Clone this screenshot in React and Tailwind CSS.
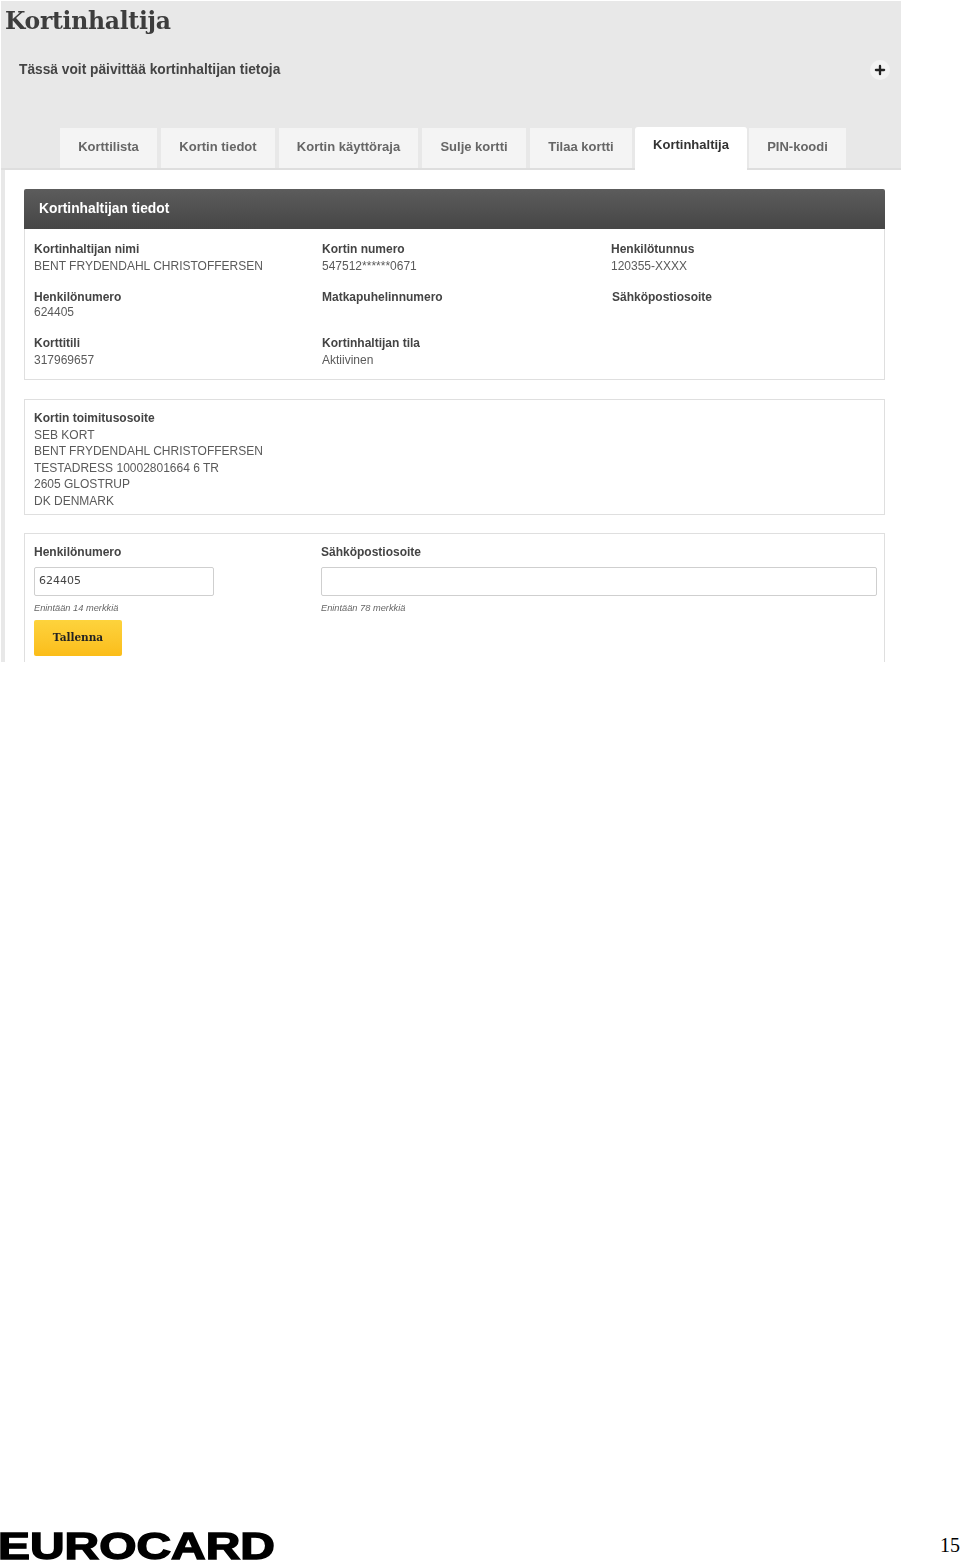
import React from "react";
import { Plus } from "lucide-react";

const sans = "font-['Liberation_Sans',Arial,sans-serif]";

const tabs = [
  { t: "Korttilista", c: "w-[97px] mr-[4px]" },
  { t: "Kortin tiedot", c: "w-[114px] mr-[4px]" },
  { t: "Kortin käyttöraja", c: "w-[139px] mr-[4px]" },
  { t: "Sulje kortti", c: "w-[104px] mr-[4px]" },
  { t: "Tilaa kortti", c: "w-[102px] mr-[3px]" },
  { t: "Kortinhaltija", c: "w-[112px] mr-[2px]", active: true },
  { t: "PIN-koodi", c: "w-[97px]" },
];

function Field({ label, value, valueClass = "", className = "" }) {
  return (
    <div className={className}>
      <div className="text-[12px] leading-[17px] font-bold text-[#444]">{label}</div>
      {value && <div className={`text-[12px] leading-[17px] text-[#5a5a5a] ${valueClass}`}>{value}</div>}
    </div>
  );
}

export default function App() {
  return (
    <div className={`h-[1562px] bg-white flex flex-col justify-between ${sans}`}>
      <div className="w-[900px] h-[661px] mt-px ml-px flex flex-col overflow-hidden blur-[0.4px]">
        <header className="h-[169px] shrink-0 bg-[#e8e8e8] border-b-2 border-[#dedede] flex flex-col">
          <h1 className="h-[38px] pl-[4px] pt-[4px] font-['DejaVu_Serif',serif] font-bold text-[23.5px] leading-[32px] text-[#3d3d3d] tracking-[-0.3px]">
            Kortinhaltija
          </h1>
          <div className="flex items-center justify-between h-[60px] mt-px pl-[18px] pr-[11px]">
            <p className="text-[13.75px] font-bold text-[#444]">Tässä voit päivittää kortinhaltijan tietoja</p>
            <span className="w-[20px] h-[20px] rounded-full bg-[#f3f3f3] flex items-center justify-center">
              <Plus size={14} strokeWidth={4} className="text-[#222]" />
            </span>
          </div>
          <nav className="flex items-end pl-[59px] mt-auto">
            {tabs.map((x) =>
              x.active ? (
                <div key={x.t} className={`${x.c} h-[43px] -mb-[2px] rounded-t-[3px] bg-white flex justify-center pt-[9px] text-[13px] leading-[18px] font-bold text-[#333]`}>
                  {x.t}
                </div>
              ) : (
                <div key={x.t} className={`${x.c} h-[40px] pb-[3px] bg-[#f4f4f4] flex items-center justify-center text-[13px] font-bold text-[#666]`}>
                  {x.t}
                </div>
              )
            )}
          </nav>
        </header>

        <div className="flex-1 bg-white border-l-4 border-[#e8e8e8] pl-[19px] pr-[16px] pt-[19px] overflow-hidden">
          <section>
            <h2 className="h-[40px] rounded-t-[2px] bg-gradient-to-b from-[#5c5c5c] to-[#464646] flex items-center pl-[15px] text-[13.8px] font-bold text-white">
              Kortinhaltijan tiedot
            </h2>
            <div className="h-[151px] border border-t-0 border-[#dfdfdf] pt-[12px] pl-[9px]">
              <div className="grid grid-cols-[288px_289px_1fr] h-[48px]">
                <Field label="Kortinhaltijan nimi" value="BENT FRYDENDAHL CHRISTOFFERSEN" />
                <Field label="Kortin numero" value="547512******0671" />
                <Field label="Henkilötunnus" value="120355-XXXX" />
              </div>
              <div className="grid grid-cols-[288px_289px_1fr] h-[46px]">
                <Field label="Henkilönumero" value="624405" valueClass="-mt-[2px]" />
                <Field label="Matkapuhelinnumero" />
                <Field label="Sähköpostiosoite" className="ml-px" />
              </div>
              <div className="grid grid-cols-[288px_289px_1fr]">
                <Field label="Korttitili" value="317969657" />
                <Field label="Kortinhaltijan tila" value="Aktiivinen" />
              </div>
            </div>
          </section>

          <section className="mt-[19px] h-[116px] border border-[#dfdfdf] pl-[9px] pt-[10px]">
            <div className="text-[12px] leading-[16.6px] font-bold text-[#444]">Kortin toimitusosoite</div>
            <div className="text-[12px] leading-[16.6px] text-[#5a5a5a]">
              <div>SEB KORT</div>
              <div>BENT FRYDENDAHL CHRISTOFFERSEN</div>
              <div>TESTADRESS 10002801664 6 TR</div>
              <div>2605 GLOSTRUP</div>
              <div>DK DENMARK</div>
            </div>
          </section>

          <section className="mt-[18px] h-[140px] border border-b-0 border-[#dfdfdf] pl-[9px] pr-[7px] pt-[10px]">
            <div className="grid grid-cols-[287px_1fr]">
              <div>
                <label className="block text-[12px] leading-[17px] font-bold text-[#444]">Henkilönumero</label>
                <input
                  readOnly
                  value="624405"
                  className="block mt-[6px] w-[180px] h-[29px] pb-[2px] rounded-[2px] border border-[#cfcfcf] bg-white px-[4px] font-['DejaVu_Sans',sans-serif] text-[11px] text-[#444] outline-none"
                />
                <p className="mt-[6px] text-[9.25px] leading-[12px] italic text-[#666]">Enintään 14 merkkiä</p>
              </div>
              <div>
                <label className="block text-[12px] leading-[17px] font-bold text-[#444]">Sähköpostiosoite</label>
                <input
                  readOnly
                  className="block mt-[6px] w-full h-[29px] rounded-[2px] border border-[#cfcfcf] bg-white outline-none"
                />
                <p className="mt-[6px] text-[9.25px] leading-[12px] italic text-[#666]">Enintään 78 merkkiä</p>
              </div>
            </div>
            <button className="mt-[6px] block w-[88px] h-[36px] rounded-[2px] bg-gradient-to-b from-[#fdd33c] to-[#fbbd18] font-['DejaVu_Serif',serif] font-bold text-[10.5px] text-[#222]">
              Tallenna
            </button>
          </section>
        </div>
      </div>

      <footer className="flex items-end justify-between h-[32px] pb-[1px]">
        <span className="inline-block -ml-[2px] origin-bottom-left scale-x-[1.295] font-bold text-[37px] leading-[28px] text-black [-webkit-text-stroke:1.4px_#000]">
          EUROCARD
        </span>
        <span className="font-['Liberation_Serif',serif] text-[20px] leading-[30px] mb-[1px] text-black">15</span>
      </footer>
    </div>
  );
}
